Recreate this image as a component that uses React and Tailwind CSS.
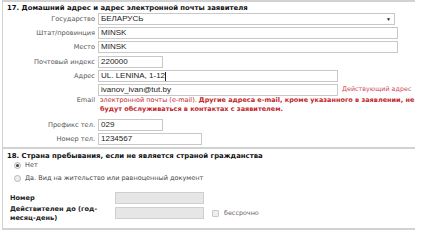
import React from "react";

const inputCls =
  "h-[12px] border border-[#c8c8c8] bg-white px-[2px] text-[8px] leading-[10px] text-[#222] font-['Liberation_Sans',Arial,sans-serif] flex items-center";

function Row({ label, children, top = 0 }) {
  return (
    <div className="flex items-center h-[12px]" style={{ marginTop: top }}>
      <div className="w-[95px] text-right pr-[3px] text-[#555] text-[6.6px] leading-[10px] whitespace-nowrap">
        {label}
      </div>
      {children}
    </div>
  );
}

export default function App() {
  return (
    <div className="w-[424px] h-[231px] bg-white overflow-hidden font-['DejaVu_Sans',Verdana,sans-serif]">
      {/* Section 17 */}
      <div className="ml-[2px] w-[413px] border-t-2 border-l border-[#d2d2d2] pt-[2px] h-[147px]">
        <div className="pl-[4px] text-[6.9px] font-bold leading-[8px] text-[#111]">
          17. Домашний адрес и адрес электронной почты заявителя
        </div>
        <div className="flex flex-col gap-[2px] mt-[1px]">
          <Row label="Государство">
            <div className={inputCls + " w-[297px] justify-between"}>
              <span>БЕЛАРУСЬ</span>
              <span className="text-[5px] text-[#222] pr-[1px]">▼</span>
            </div>
          </Row>
          <Row label="Штат/провинция">
            <div className={inputCls + " w-[300px]"}>MINSK</div>
          </Row>
          <Row label="Место">
            <div className={inputCls + " w-[300px]"}>MINSK</div>
          </Row>
          <Row label="Почтовый индекс" top={1}>
            <div className={inputCls + " w-[65px]"}>220000</div>
          </Row>
          <Row label="Адрес">
            <div className={inputCls + " w-[240px] border-[#9fb3cf]"}>
              UL. LENINA, 1-12<span className="inline-block w-[1px] h-[9px] bg-[#222]"></span>
            </div>
          </Row>
          {/* Email */}
          <div className="flex items-center">
            <div className="w-[95px] text-right pr-[3px] text-[#555] text-[6.6px] leading-[10px] pt-[2px]">
              Email
            </div>
            <div className="flex flex-col">
              <div className="flex items-center h-[12px]">
                <div className={inputCls + " w-[240px]"}>ivanov_ivan@tut.by</div>
                <span className="ml-[4px] text-[6.4px] text-[#d04a5a] whitespace-nowrap">
                  Действующий адрес
                </span>
              </div>
              <div className="pl-[2px] text-[6.5px] leading-[9px] text-[#c1272d] whitespace-nowrap">
                <span className="font-normal">электронной почты (e-mail). </span>
                <span className="font-bold">
                  Другие адреса e-mail, кроме указанного в заявлении, не
                </span>
              </div>
              <div className="pl-[2px] text-[6.5px] leading-[9px] text-[#c1272d] font-bold whitespace-nowrap">
                будут обслуживаться в контактах с заявителем.
              </div>
            </div>
          </div>
          <Row label="Префикс тел." top={3}>
            <div className={inputCls + " w-[65px]"}>029</div>
          </Row>
          <Row label="Номер тел.">
            <div className={inputCls + " w-[104px]"}>1234567</div>
          </Row>
        </div>
      </div>

      {/* Section 18 */}
      <div className="ml-[2px] w-[413px] border-t-2 border-l border-b-2 border-[#d2d2d2] pt-[3px] h-[83px]">
        <div className="pl-[4px] text-[6.9px] font-bold leading-[8px] text-[#111]">
          18. Страна пребывания, если не является страной гражданства
        </div>
        <div className="flex items-center mt-[1px] pl-[11px] h-[9px]">
          <span className="w-[7px] h-[7px] rounded-full border border-[#b5b5b5] bg-[#eee] flex items-center justify-center">
            <span className="w-[3px] h-[3px] rounded-full bg-[#444]"></span>
          </span>
          <span className="ml-[4px] text-[6.5px] text-[#444]">Нет</span>
        </div>
        <div className="flex items-center mt-[4px] pl-[11px] h-[9px]">
          <span className="w-[7px] h-[7px] rounded-full border border-[#b5b5b5] bg-[#eee]"></span>
          <span className="ml-[4px] text-[6.5px] text-[#444]">
            Да. Вид на жительство или равноценный документ
          </span>
        </div>
        <div className="flex mt-[8px] pl-[7px]">
          <div className="w-[105px] flex flex-col text-[6.6px] font-bold text-[#222] leading-[9px]">
            <div className="h-[14px] flex items-center">Номер</div>
            <div>
              Действителен до (год-
              <br />
              месяц-день)
            </div>
          </div>
          <div className="flex flex-col gap-[3px] mt-[1px]">
            <div className="w-[89px] h-[12px] bg-[#e6e6e6] border border-[#cfcfcf]"></div>
            <div className="flex items-center">
              <div className="w-[89px] h-[12px] bg-[#e6e6e6] border border-[#cfcfcf]"></div>
              <span className="ml-[8px] w-[7px] h-[7px] border border-[#c8c8c8] bg-[#eee] rounded-[1px]"></span>
              <span className="ml-[5px] text-[6.4px] text-[#666] mt-[2px]">бессрочно</span>
            </div>
          </div>
        </div>
      </div>
    </div>
  );
}
